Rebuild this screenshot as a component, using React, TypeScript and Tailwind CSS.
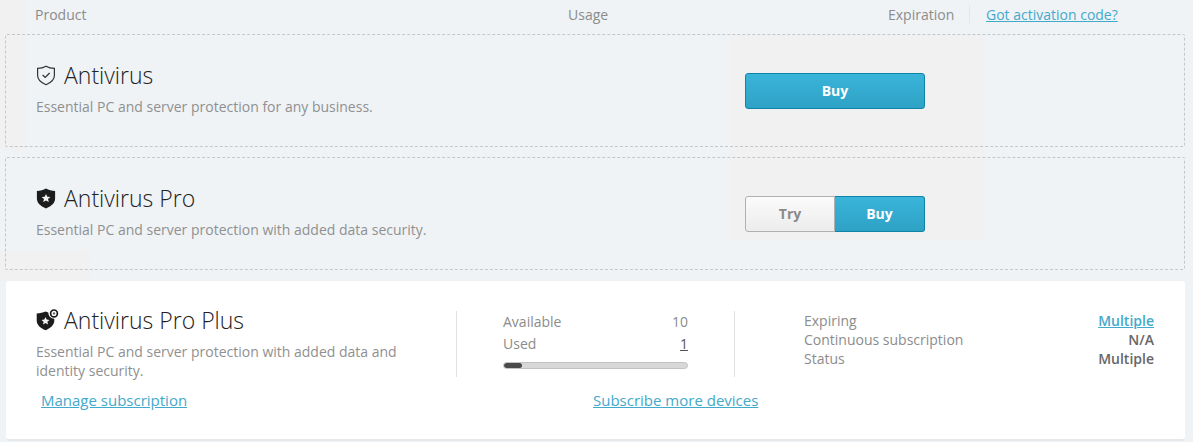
import React from 'react';

const ShieldOutline = () => (
  <svg width="20" height="21" viewBox="0 0 20 21" fill="none" stroke="#333" strokeWidth="1.2" className="shrink-0">
    <path d="M10 1.2 C7.6 2.6 4.8 3.3 1.6 3.3 V10.5 C1.6 14.8 5.4 17.8 10 19.7 C14.6 17.8 18.4 14.8 18.4 10.5 V3.3 C15.2 3.3 12.4 2.6 10 1.2 Z" />
    <path d="M6.6 10 L9.2 12.4 L13.6 8" strokeWidth="1.3" />
  </svg>
);

const ShieldStar = () => (
  <svg width="20" height="21" viewBox="0 0 20 21" className="shrink-0">
    <path fill="#1c1c1c" d="M10 0.6 C7.4 2.2 4.2 3 0.9 3 V10.5 C0.9 15.2 5 18.3 10 20.4 C15 18.3 19.1 15.2 19.1 10.5 V3 C15.8 3 12.6 2.2 10 0.6 Z" />
    <path fill="#f4f4f4" d="M10 6 L11.3 8.8 L14.4 9.1 L12 11.1 L12.8 14.1 L10 12.5 L7.2 14.1 L8 11.1 L5.6 9.1 L8.7 8.8 Z" />
  </svg>
);

const ShieldStarPlus = () => (
  <svg width="23" height="22" viewBox="0 0 23 22" className="shrink-0">
    <path fill="#1c1c1c" d="M9.5 2.6 C7 3.8 4 4.4 0.7 4.4 V11.4 C0.7 16 4.8 19.2 9.5 21.2 C14.2 19.2 18.3 16 18.3 11.4 V9.8 A6 6 0 0 1 12.3 3.6 C11.3 3.4 10.4 3 9.5 2.6 Z" />
    <path fill="#f4f4f4" d="M9.5 8 L10.7 10.6 L13.5 10.9 L11.4 12.8 L12 15.5 L9.5 14.1 L7 15.5 L7.6 12.8 L5.5 10.9 L8.3 10.6 Z" />
    <circle cx="18" cy="4.4" r="3.4" fill="none" stroke="#1c1c1c" strokeWidth="1.7" />
    <circle cx="18" cy="4.4" r="1.2" fill="#666" />
  </svg>
);

const buyGradient = 'bg-gradient-to-b from-[#3ab4da] to-[#2ea2c5] border border-[#0f84a6] text-white font-bold text-[14px] pb-[2px]';

const ProductRow = ({ icon, name, description, children }: { icon: React.ReactNode; name: string; description: string; children: React.ReactNode }) => (
  <div className="h-[113px] ml-[5px] mr-[8px] border border-dashed border-[#c4c8cb] rounded-[2px] flex pl-[30px]">
    <div className="w-[709px] pt-[27px]">
      <div className="flex items-center gap-[8px] h-[26px]">
        {icon}
        <span className="text-[23px] leading-[28px] font-light text-[#222]">{name}</span>
      </div>
      <p className="mt-[9px] text-[14px] leading-[20px] text-[#909090]">{description}</p>
    </div>
    <div className="pt-[38px]">{children}</div>
  </div>
);

export default function App() {
  return (
    <div className="relative isolate w-[1193px] h-[442px] overflow-hidden bg-[#eff3f6] font-['Open_Sans',sans-serif]">
      {/* faint background blotches */}
      <div className="absolute -z-10 left-0 top-0 w-[26px] h-[150px] bg-[#f1f1f1]" />
      <div className="absolute -z-10 left-0 top-[250px] w-[90px] h-[32px] bg-[#f1f1f1]" />
      <div className="absolute -z-10 left-[730px] top-[35px] w-[254px] h-[205px] bg-[#f1f1f1]" />

      {/* Header */}
      <div className="h-[34px] flex items-start pt-[5px] text-[14px] leading-[20px] text-[#8c8c8c]">
        <span className="ml-[35px] w-[533px]">Product</span>
        <span className="w-[320px]">Usage</span>
        <span className="w-[81px]">Expiration</span>
        <span className="w-px h-[18px] bg-[#e4e7e9] mr-[16px]" />
        <a className="text-[#43a9cb] underline">Got activation code?</a>
      </div>

      <ProductRow icon={<ShieldOutline />} name="Antivirus" description="Essential PC and server protection for any business.">
        <button className={`${buyGradient} w-[180px] h-[36px] rounded-[3px]`}>Buy</button>
      </ProductRow>

      <div className="h-[10px]" />

      <ProductRow icon={<ShieldStar />} name="Antivirus Pro" description="Essential PC and server protection with added data security.">
        <div className="flex">
          <button className="w-[90px] h-[36px] pb-[2px] rounded-l-[3px] bg-gradient-to-b from-[#fbfbfb] to-[#ececec] border border-[#b0b0b0] text-[#8a8a8a] font-bold text-[14px]">Try</button>
          <button className={`${buyGradient} w-[90px] h-[36px] rounded-r-[3px] border-l-0`}>Buy</button>
        </div>
      </ProductRow>

      <div className="h-[11px]" />

      {/* Active product */}
      <div className="ml-[6px] mr-[8px] h-[160px] bg-white rounded-[3px] border-b-2 border-[#e6e8ea] pt-[30px]">
        <div className="flex">
          <div className="w-[451px] h-[66px] border-r border-[#e2e2e2] pl-[30px] pr-[40px]">
            <div className="flex items-center gap-[5px] h-[18px]">
              <ShieldStarPlus />
              <span className="text-[23px] leading-[28px] font-light text-[#222]">Antivirus Pro Plus</span>
            </div>
            <p className="mt-[13px] text-[14px] leading-[19px] text-[#909090]">
              Essential PC and server protection with added data and identity security.
            </p>
          </div>
          <div className="w-[278px] h-[66px] px-[46px] border-r border-[#e2e2e2] text-[14px] text-[#8c8c8c]">
            <div className="flex justify-between leading-[22px]">
              <span>Available</span>
              <span>10</span>
            </div>
            <div className="flex justify-between leading-[22px]">
              <span>Used</span>
              <span className="text-[#555] underline">1</span>
            </div>
            <div className="mt-[7px] h-[7px] rounded-full bg-[#d8d8d8] border border-[#c2c2c2] overflow-hidden">
              <div className="h-full w-[10%] bg-[#4a4a4a] rounded-full" />
            </div>
          </div>
          <div className="ml-[69px] w-[350px] text-[14px] leading-[19px]">
            <div className="flex justify-between">
              <span className="text-[#8c8c8c]">Expiring</span>
              <a className="text-[#43a9cb] underline font-semibold">Multiple</a>
            </div>
            <div className="flex justify-between">
              <span className="text-[#8c8c8c]">Continuous subscription</span>
              <span className="text-[#666] font-semibold">N/A</span>
            </div>
            <div className="flex justify-between">
              <span className="text-[#8c8c8c]">Status</span>
              <span className="text-[#666] font-semibold">Multiple</span>
            </div>
          </div>
        </div>
        <div className="flex text-[15px] leading-[20px] mt-[13px] text-[#43a9cb]">
          <a className="ml-[35px] w-[552px] underline">Manage subscription</a>
          <a className="underline">Subscribe more devices</a>
        </div>
      </div>
    </div>
  );
}
